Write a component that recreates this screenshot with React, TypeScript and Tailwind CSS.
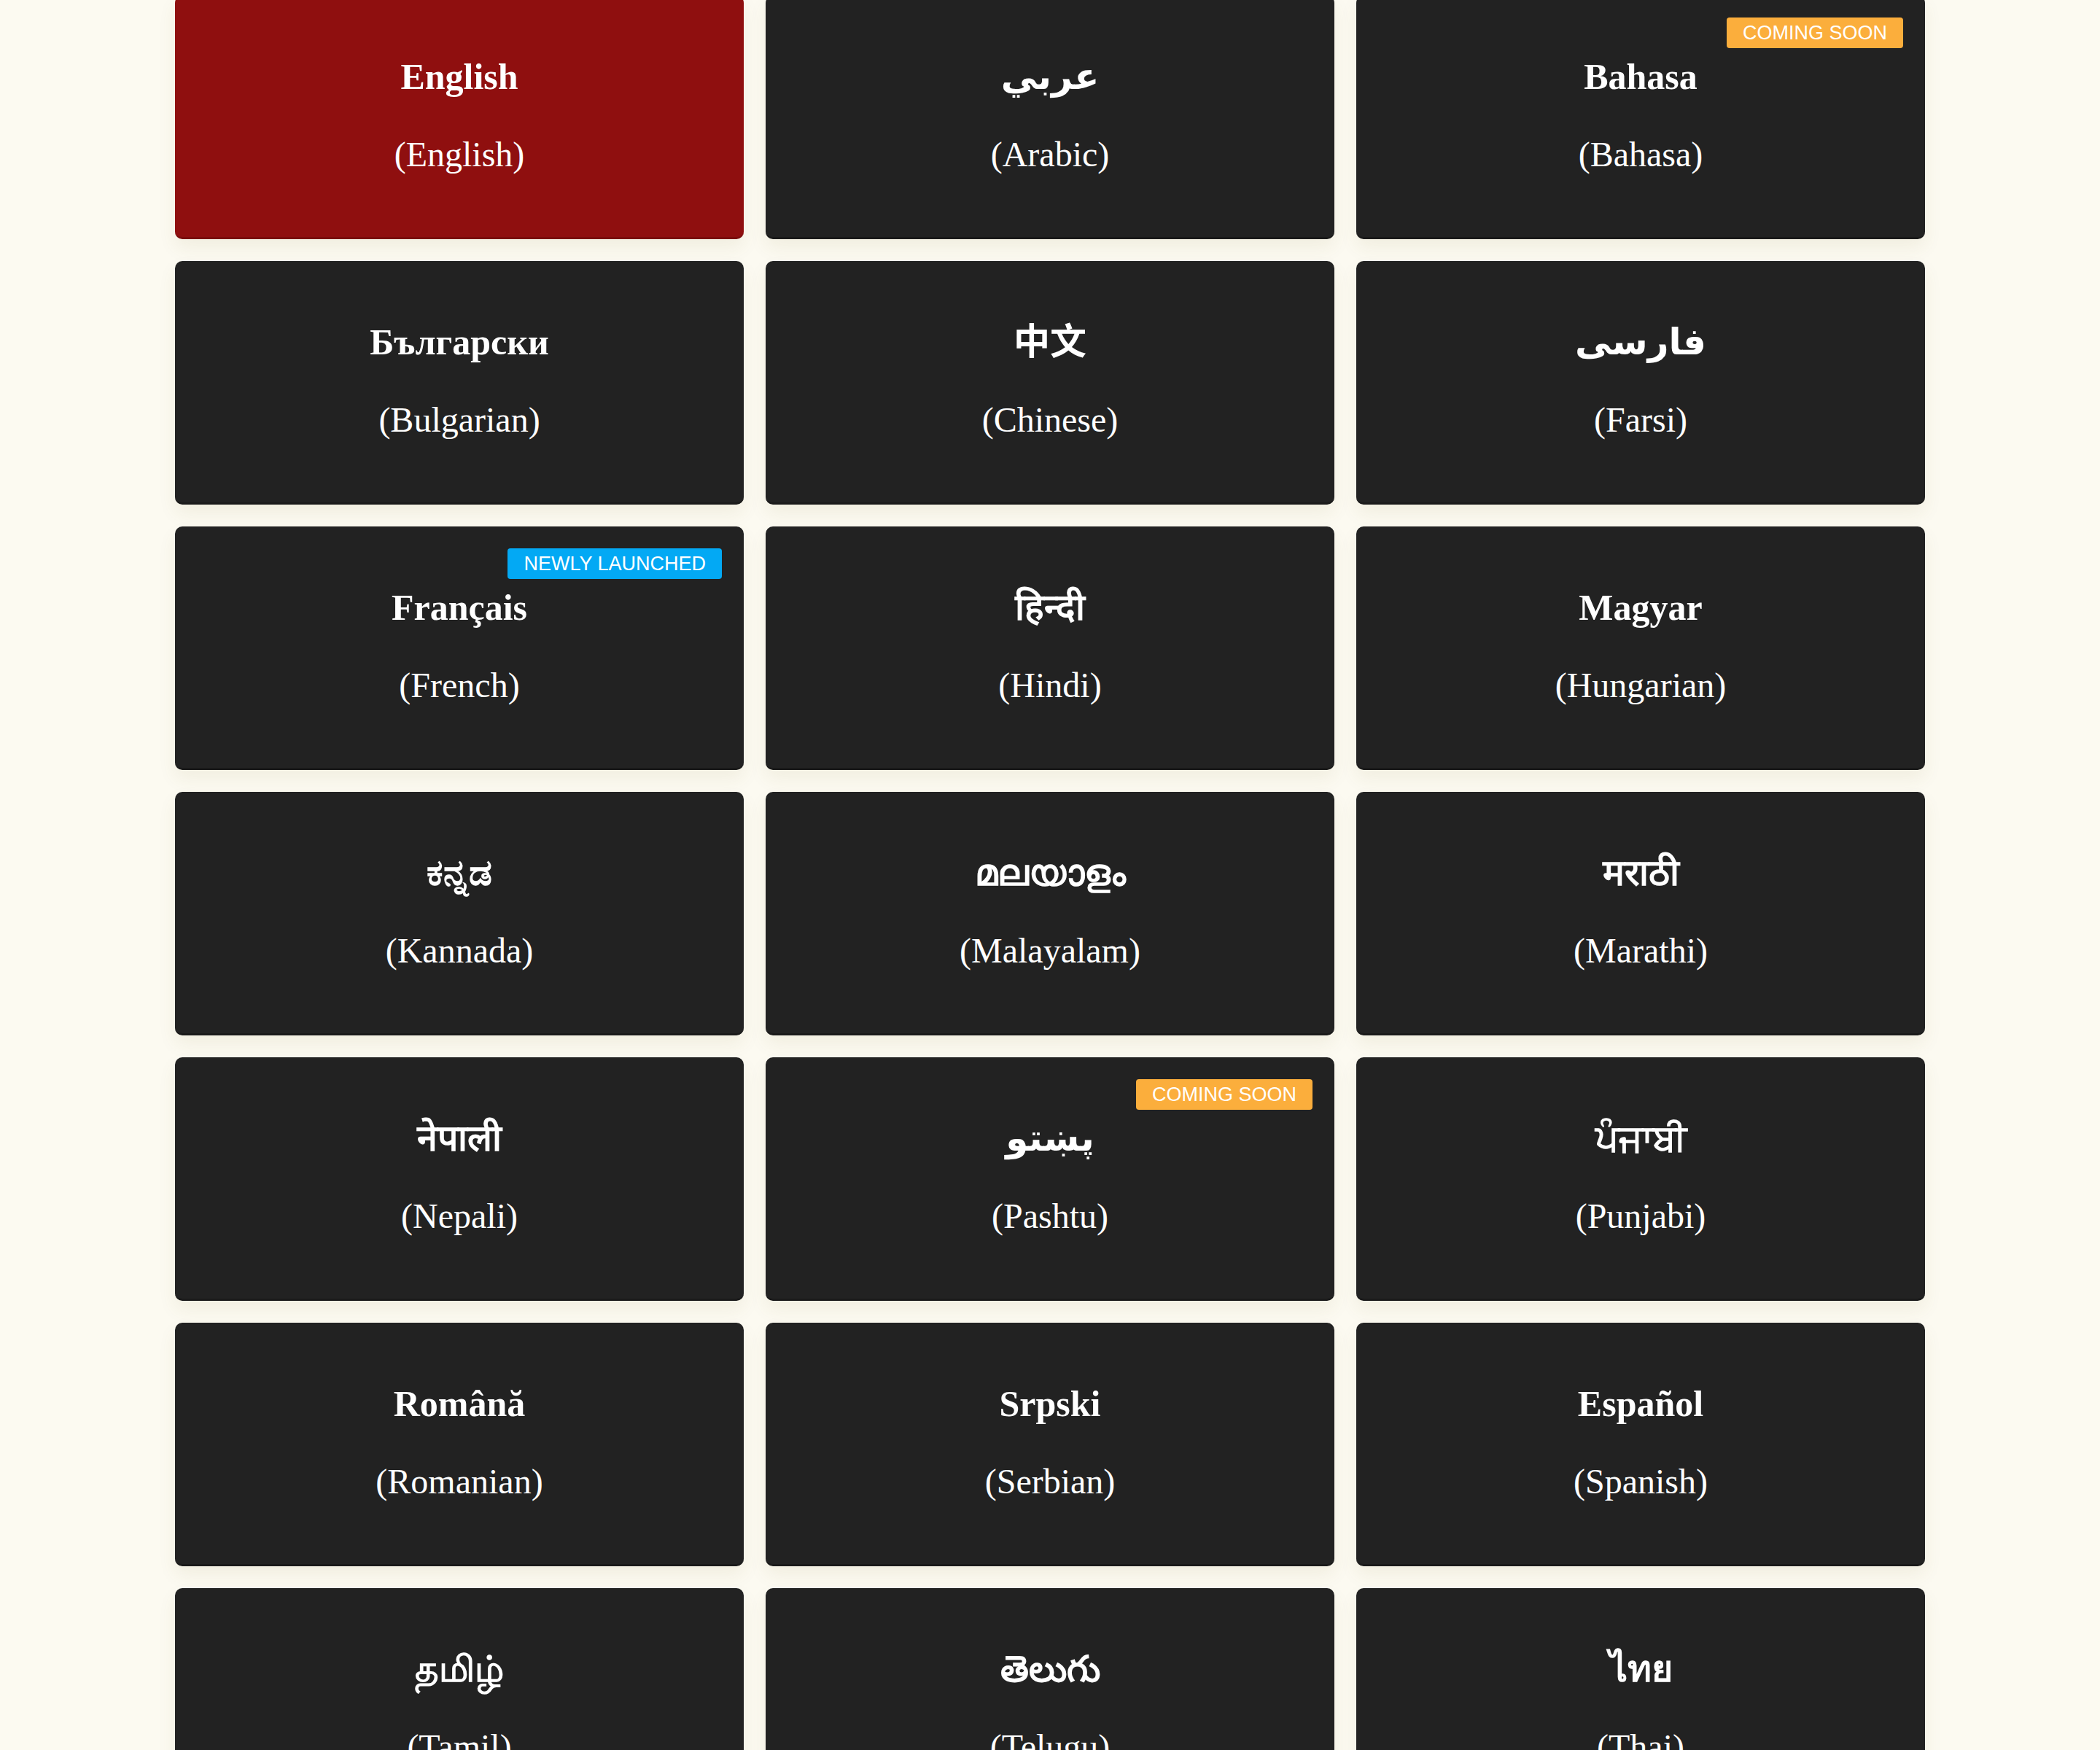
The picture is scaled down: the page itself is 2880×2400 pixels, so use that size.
import React from 'react';

type Lang = {
    native: string;
    english: string;
    badge?: 'soon' | 'new';
    active?: boolean;
};

const languages: Lang[] = [
    { native: 'English', english: 'English', active: true },
    { native: 'عربي', english: 'Arabic' },
    { native: 'Bahasa', english: 'Bahasa', badge: 'soon' },
    { native: 'Български', english: 'Bulgarian' },
    { native: '中文', english: 'Chinese' },
    { native: 'فارسی', english: 'Farsi' },
    { native: 'Français', english: 'French', badge: 'new' },
    { native: 'हिन्दी', english: 'Hindi' },
    { native: 'Magyar', english: 'Hungarian' },
    { native: 'ಕನ್ನಡ', english: 'Kannada' },
    { native: 'മലയാളം', english: 'Malayalam' },
    { native: 'मराठी', english: 'Marathi' },
    { native: 'नेपाली', english: 'Nepali' },
    { native: 'پښتو', english: 'Pashtu', badge: 'soon' },
    { native: 'ਪੰਜਾਬੀ', english: 'Punjabi' },
    { native: 'Română', english: 'Romanian' },
    { native: 'Srpski', english: 'Serbian' },
    { native: 'Español', english: 'Spanish' },
    { native: 'தமிழ்', english: 'Tamil' },
    { native: 'తెలుగు', english: 'Telugu' },
    { native: 'ไทย', english: 'Thai' },
];

function Badge({ kind }: { kind: 'soon' | 'new' }) {
    const isSoon = kind === 'soon';
    return (
        <span
            className={`absolute top-[30px] right-[30px] rounded-[4px] px-[22px] py-[5px] text-[27px] leading-[32px] text-white font-['Liberation_Sans',Arial,sans-serif] ${
                isSoon ? 'bg-[#fbae3c]' : 'bg-[#03a9f4]'
            }`}
        >
            {isSoon ? 'COMING SOON' : 'NEWLY LAUNCHED'}
        </span>
    );
}

function LanguageCard({ lang }: { lang: Lang }) {
    return (
        <button
            className={`relative flex h-[334px] flex-col items-center justify-center gap-[48px] rounded-[10px] border-b-[3px] pb-[4px] text-white shadow-[0_12px_24px_rgba(120,100,40,0.08)] ${
                lang.active ? 'bg-[#8f0f0f] border-[#7a0c0c]' : 'bg-[#222222] border-[#1a1a1a]'
            }`}
        >
            {lang.badge && <Badge kind={lang.badge} />}
            <span className="text-[50px] font-bold leading-[60px] font-['Liberation_Serif','DejaVu_Sans','Noto_Sans_CJK_SC',serif]">
                {lang.native}
            </span>
            <span className="text-[48px] leading-[58px] font-['Liberation_Serif',serif]">
                ({lang.english})
            </span>
        </button>
    );
}

export default function App() {
    return (
        <div className="h-[2400px] overflow-hidden bg-[#fcfaf1]">
            <div className="mx-auto -mt-[6px] grid w-[2400px] grid-cols-3 gap-x-[30px] gap-y-[30px]">
                {languages.map((lang) => (
                    <LanguageCard key={lang.english} lang={lang} />
                ))}
            </div>
        </div>
    );
}
